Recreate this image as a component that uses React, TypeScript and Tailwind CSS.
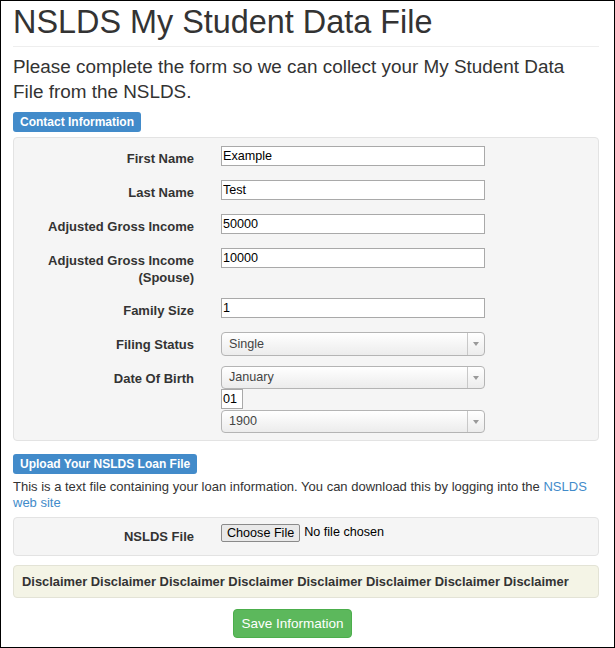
const font = { fontFamily: '"Liberation Sans", Arial, sans-serif' };

function Label({ children }: { children: React.ReactNode }) {
  return (
    <div className="w-[180px] shrink-0 text-right text-[13px] leading-[17px] font-bold text-[#333] pt-[4px]">
      {children}
    </div>
  );
}

function TextInput({ value, w = "w-[264px]" }: { value: string; w?: string }) {
  return (
    <input
      type="text"
      defaultValue={value}
      className={`${w} h-[20px] border border-[#a9a9a9] bg-white px-[1px] text-[12.6px] text-black outline-none`}
    />
  );
}

function Select({ value, h = "h-[24px]" }: { value: string; h?: string }) {
  return (
    <div
      className={`w-[264px] ${h} flex rounded-[4px] border border-[#b4b4b4] bg-gradient-to-b from-white to-[#ececec] text-[12.6px] text-[#444]`}>
      <div className="flex-1 flex items-center pl-[7px]">{value}</div>
      <div className="w-[17px] border-l border-[#c8c8c8] flex items-center justify-center">
        <svg width="6" height="4" viewBox="0 0 6 4">
          <path d="M0 0h6L3 4z" fill="#999" />
        </svg>
      </div>
    </div>
  );
}

function Row({
  label,
  children,
  className = "",
}: {
  label: React.ReactNode;
  children: React.ReactNode;
  className?: string;
}) {
  return (
    <div className={`flex gap-[27px] ${className}`}>
      <Label>{label}</Label>
      <div className="flex flex-col">{children}</div>
    </div>
  );
}

function Badge({ children }: { children: React.ReactNode }) {
  return (
    <span className="inline-block bg-[#428bca] text-white font-bold text-[12px] leading-[20px] px-[7px] rounded-[3px]">
      {children}
    </span>
  );
}

export default function App() {
  return (
    <div
      style={font}
      className="w-[615px] h-[648px] border border-black bg-white text-[#333] overflow-hidden">
      <div className="pl-[12px] pr-[15px]">
        <div className="pt-[3px] pb-[6px] border-b border-[#eee]">
          <h1 className="text-[32.4px] leading-[36px] font-normal text-[#333]">
            NSLDS My Student Data File
          </h1>
        </div>
        <p className="mt-[7px] text-[18.9px] leading-[25px] text-[#333] pr-[20px]">
          Please complete the form so we can collect your My Student Data File
          from the NSLDS.
        </p>
        <div className="mt-[8px] leading-[0]">
          <Badge>Contact Information</Badge>
        </div>
        <div className="mt-[5px] bg-[#f5f5f5] border border-[#e3e3e3] rounded-[4px] pt-[8px] pb-[7px] flex flex-col gap-[14px]">
          <Row label="First Name" className="h-[20px]">
            <TextInput value="Example" />
          </Row>
          <Row label="Last Name" className="h-[20px]">
            <TextInput value="Test" />
          </Row>
          <Row label="Adjusted Gross Income" className="h-[20px]">
            <TextInput value="50000" />
          </Row>
          <Row
            className="h-[36px]"
            label={
              <>
                Adjusted Gross Income
                <br />
                (Spouse)
              </>
            }>
            <TextInput value="10000" />
          </Row>
          <Row label="Family Size" className="h-[20px]">
            <TextInput value="1" />
          </Row>
          <Row label="Filing Status">
            <Select value="Single" />
          </Row>
          <Row label="Date Of Birth" className="-mt-[4px]">
            <Select value="January" h="h-[23px]" />
            <TextInput value="01" w="w-[22px]" />
            <div className="mt-[1px]">
              <Select value="1900" h="h-[23px]" />
            </div>
          </Row>
        </div>
        <div className="mt-[13px] leading-[0]">
          <Badge>Upload Your NSLDS Loan File</Badge>
        </div>
        <p className="mt-[5px] text-[13px] leading-[16px] text-[#333]">
          This is a text file containing your loan information. You can download
          this by logging into the{" "}
          <a href="#" className="text-[#428bca]">
            NSLDS web site
          </a>
        </p>
        <div className="mt-[6px] bg-[#f5f5f5] border border-[#e3e3e3] rounded-[4px] h-[39px] flex gap-[27px] pt-[6px]">
          <Label>NSLDS File</Label>
          <div className="flex items-start gap-[4px] text-[12.6px] text-black">
            <button className="h-[18px] px-[5px] border border-[#8a8a8a] rounded-[2px] bg-[#e9e9e9] text-[12.6px] leading-[16px] text-black">
              Choose File
            </button>
            <span className="leading-[16px]">No file chosen</span>
          </div>
        </div>
        <div className="mt-[9px] bg-[#f4f4e6] border border-[#e3e3d6] rounded-[4px] h-[33px] flex items-center pl-[8px] text-[12.9px] font-bold text-[#333]">
          Disclaimer Disclaimer Disclaimer Disclaimer Disclaimer Disclaimer
          Disclaimer Disclaimer
        </div>
        <div className="mt-[11px] pl-[220px] leading-[0]">
          <button className="h-[29px] w-[119px] bg-[#5cb85c] border border-[#4cae4c] rounded-[4px] text-white text-[13.5px] leading-[27px]">
            Save Information
          </button>
        </div>
      </div>
    </div>
  );
}
